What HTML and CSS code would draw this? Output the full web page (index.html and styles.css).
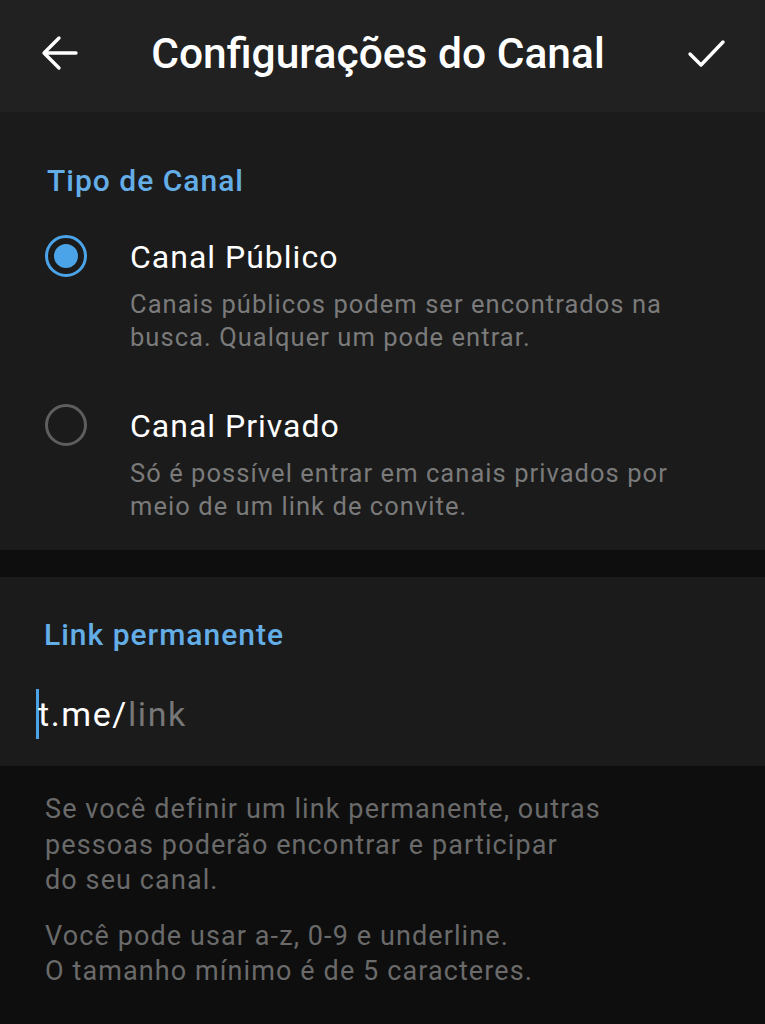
FILE: index.html
```html
<!DOCTYPE html>
<html lang="pt-BR">
<head>
    <meta charset="UTF-8">
    <meta name="viewport" content="width=device-width, initial-scale=1.0">
    <title>Configurações do Canal</title>
    <link rel="stylesheet" href="styles.css">
</head>
<body>
    <header class="topbar">
        <button class="icon-btn" aria-label="Voltar">
            <svg width="40" height="40" viewBox="0 0 40 40"><path d="M36 20H5M19 5L4 20l15 15" fill="none" stroke="#fff" stroke-width="3.4" stroke-linecap="round" stroke-linejoin="round"/></svg>
        </button>
        <h1 class="title">Configurações do Canal</h1>
        <button class="icon-btn" aria-label="Salvar">
            <svg width="40" height="40" viewBox="0 0 40 40"><path d="M4 21l11 11L37 9" fill="none" stroke="#fff" stroke-width="3.4" stroke-linecap="round" stroke-linejoin="round"/></svg>
        </button>
    </header>

    <section class="card type-card">
        <h2 class="section-title">Tipo de Canal</h2>

        <label class="option">
            <span class="radio checked"></span>
            <span class="option-text">
                <span class="option-name">Canal Público</span>
                <span class="option-desc">Canais públicos podem ser encontrados na<br>busca. Qualquer um pode entrar.</span>
            </span>
        </label>

        <label class="option">
            <span class="radio"></span>
            <span class="option-text">
                <span class="option-name">Canal Privado</span>
                <span class="option-desc">Só é possível entrar em canais privados por<br>meio de um link de convite.</span>
            </span>
        </label>
    </section>

    <section class="card link-card">
        <h2 class="section-title">Link permanente</h2>
        <div class="link-field"><span class="caret"></span><span class="prefix">t.me/</span><span class="placeholder">link</span></div>
    </section>

    <div class="hint">
        <p>Se você definir um link permanente, outras<br>pessoas poderão encontrar e participar<br>do seu canal.</p>
        <p>Você pode usar a-z, 0-9 e underline.<br>O tamanho mínimo é de 5 caracteres.</p>
    </div>
</body>
</html>
```

FILE: styles.css
```css
* {
    box-sizing: border-box;
}
body {
    margin: 0;
    background: #0e0e0e;
    font-family: Roboto, "Noto Sans", sans-serif;
    color: #fff;
    width: 765px;
    min-height: 1024px;
}
.topbar {
    height: 112px;
    background: #212121;
    display: flex;
    align-items: center;
    padding: 0 39px 6px 40px;
}
.icon-btn {
    background: none;
    border: none;
    padding: 0;
    width: 40px;
    height: 40px;
    display: flex;
}
.title {
    flex: 1;
    margin: 0;
    padding-right: 10px;
    text-align: center;
    font-size: 42.5px;
    font-weight: 500;
}
.card {
    background: #1b1b1b;
}
.type-card {
    padding-top: 52px;
    height: 438px;
}
.section-title {
    margin: 0;
    color: #64aee8;
    font-size: 30px;
    font-weight: 500;
    letter-spacing: 1px;
    line-height: 34px;
    padding-left: 47px;
}
.option {
    display: flex;
    margin-top: 37px;
}
.option + .option {
    margin-top: 50px;
}
.radio {
    width: 42px;
    height: 42px;
    margin: 0 0 0 45px;
    border-radius: 50%;
    border: 3px solid #5e5e5e;
    flex-shrink: 0;
    position: relative;
}
.radio.checked {
    border-color: #4ba3e8;
}
.radio.checked::after {
    content: "";
    position: absolute;
    left: 6px;
    top: 6px;
    width: 24px;
    height: 24px;
    border-radius: 50%;
    background: #4ba3e8;
}
.option-text {
    display: flex;
    flex-direction: column;
    margin-left: 43px;
}
.option-name {
    font-size: 32px;
    letter-spacing: 1px;
    line-height: 40px;
    margin-top: 2px;
}
.option-desc {
    margin-top: 11px;
    font-size: 25.5px;
    letter-spacing: 1.05px;
    line-height: 33px;
    color: #7a7a7a;
    white-space: nowrap;
}
.link-card {
    margin-top: 27px;
    height: 189px;
    padding-top: 41px;
}
.link-card .section-title {
    padding-left: 44px;
}
.link-field {
    display: flex;
    align-items: center;
    margin-top: 37px;
    font-size: 34px;
    letter-spacing: 1.6px;
    height: 50px;
    padding-left: 36px;
}
.caret {
    width: 3px;
    height: 50px;
    background: #4ba3e8;
    margin-right: -1px;
}
.prefix {
    color: #fff;
}
.placeholder {
    color: #777;
}
.hint {
    padding: 26px 0 0 45px;
    color: #6a6a6a;
    font-size: 27px;
    letter-spacing: 1.1px;
    line-height: 35.5px;
    white-space: nowrap;
}
.hint p {
    margin: 0 0 20px;
}
```
